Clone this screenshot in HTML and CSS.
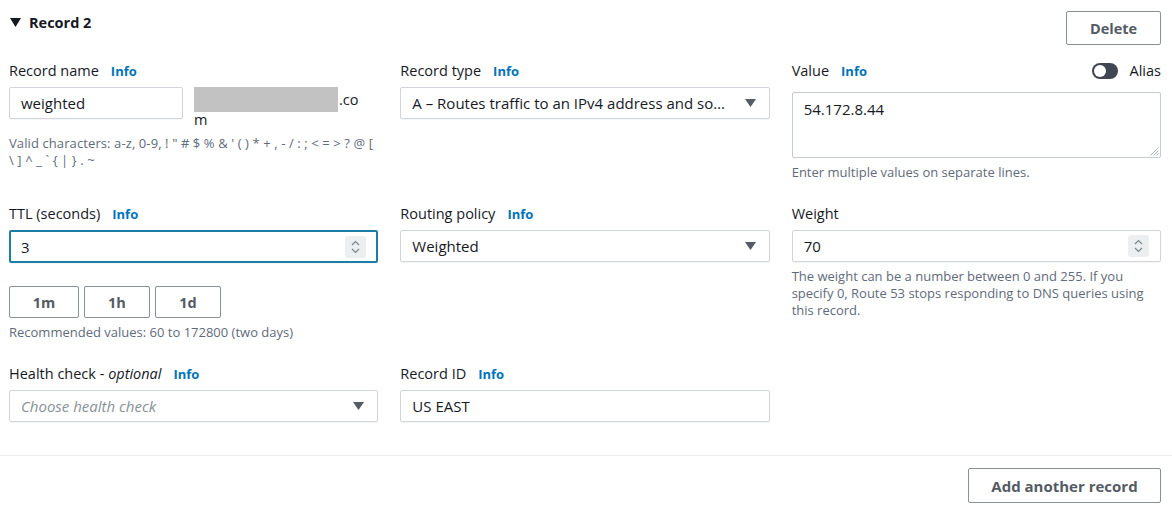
FILE: index.html
```html
<!DOCTYPE html>
<html lang="en">
<head>
<meta charset="utf-8">
<title>Record 2</title>
<link rel="stylesheet" href="styles.css">
</head>
<body>
<div class="page">
  <div class="header">
    <div class="title">
      <svg class="caret" width="11" height="9" viewBox="0 0 11 9"><path d="M0 0H11L5.5 9Z" fill="#16191f"/></svg>
      <span>Record 2</span>
    </div>
    <button class="btn btn-delete">Delete</button>
  </div>

  <div class="grid">
    <div class="field">
      <div class="label"><span>Record name</span><a class="info">Info</a></div>
      <div class="name-row">
        <div class="input name-input">weighted</div>
        <div class="domain">
          <div class="domain-line"><span class="redact"></span><span>.co</span></div>
          <div class="domain-tail">m</div>
        </div>
      </div>
      <div class="help help-chars">Valid characters: a-z, 0-9, ! " # $ % &amp; ' ( ) * + , - / : ; &lt; = &gt; ? @ [<br>\ ] ^ _ ` { | } . ~</div>
    </div>

    <div class="field">
      <div class="label"><span>Record type</span><a class="info">Info</a></div>
      <div class="input select">
        <span class="sel-text">A – Routes traffic to an IPv4 address and so…</span>
        <svg class="arrow" width="11" height="8" viewBox="0 0 11 8"><path d="M0 0H11L5.5 8Z" fill="#545b64"/></svg>
      </div>
    </div>

    <div class="field">
      <div class="label label-split">
        <div class="label-left"><span>Value</span><a class="info">Info</a></div>
        <div class="alias"><span class="toggle"><span class="knob"></span></span><span>Alias</span></div>
      </div>
      <div class="textarea">
        <div class="ta-text">54.172.8.44</div>
        <div class="ta-foot"><svg class="grip" width="10" height="10" viewBox="0 0 10 10"><path d="M9.5 1.5L1.5 9.5M9.5 4.5L4.5 9.5M9.5 7.5L7.5 9.5" stroke="#aab0b5" stroke-width="1"/></svg></div>
      </div>
      <div class="help help-value">Enter multiple values on separate lines.</div>
    </div>

    <div class="field">
      <div class="label"><span>TTL (seconds)</span><a class="info">Info</a></div>
      <div class="input number focused">
        <span>3</span>
        <span class="spin"><svg width="9" height="14" viewBox="0 0 9 14"><path d="M1 5L4.5 1.5L8 5M1 9L4.5 12.5L8 9" fill="none" stroke="#7d868c" stroke-width="1.2"/></svg></span>
      </div>
      <div class="ttl-buttons">
        <button class="btn btn-ttl">1m</button>
        <button class="btn btn-ttl">1h</button>
        <button class="btn btn-ttl">1d</button>
      </div>
      <div class="help help-rec">Recommended values: 60 to 172800 (two days)</div>
    </div>

    <div class="field">
      <div class="label"><span>Routing policy</span><a class="info">Info</a></div>
      <div class="input select">
        <span class="sel-text">Weighted</span>
        <svg class="arrow" width="11" height="8" viewBox="0 0 11 8"><path d="M0 0H11L5.5 8Z" fill="#545b64"/></svg>
      </div>
    </div>

    <div class="field">
      <div class="label"><span>Weight</span></div>
      <div class="input number">
        <span>70</span>
        <span class="spin"><svg width="9" height="14" viewBox="0 0 9 14"><path d="M1 5L4.5 1.5L8 5M1 9L4.5 12.5L8 9" fill="none" stroke="#7d868c" stroke-width="1.2"/></svg></span>
      </div>
      <div class="help help-weight">The weight can be a number between 0 and 255. If you specify 0, Route 53 stops responding to DNS queries using this record.</div>
    </div>

    <div class="field">
      <div class="label"><span>Health check - <em>optional</em></span><a class="info">Info</a></div>
      <div class="input select">
        <span class="sel-text placeholder">Choose health check</span>
        <svg class="arrow" width="11" height="8" viewBox="0 0 11 8"><path d="M0 0H11L5.5 8Z" fill="#545b64"/></svg>
      </div>
    </div>

    <div class="field">
      <div class="label"><span>Record ID</span><a class="info">Info</a></div>
      <div class="input">US EAST</div>
    </div>

    <div class="field"></div>
  </div>
</div>
<div class="divider"></div>
<div class="footer">
  <button class="btn btn-add">Add another record</button>
</div>
</body>
</html>
```

FILE: styles.css
```css
* { box-sizing: border-box; }
html, body { margin: 0; padding: 0; background: #fff; }
body {
  font-family: "Open Sans", "Noto Sans", "Liberation Sans", sans-serif;
  color: #16191f;
  font-size: 14px;
  width: 1172px;
  height: 508px;
  overflow: hidden;
}
.page { padding: 11px 11px 0 9px; }
.header { display: flex; justify-content: space-between; align-items: flex-start; height: 34px; }
.title { display: flex; align-items: center; gap: 8px; font-weight: 700; font-size: 14.5px; margin-top: 2px; padding-left: 1px; }
.caret { display: block; }
.btn {
  font-family: inherit;
  background: #fff;
  border: 1px solid #879196;
  border-radius: 2px;
  color: #545b64;
  font-weight: 700;
  font-size: 14.5px;
  cursor: pointer;
  padding: 0;
}
.btn-delete { width: 95px; height: 34px; }

.grid {
  margin-top: 16px;
  display: grid;
  grid-template-columns: repeat(3, minmax(0, 1fr));
  column-gap: 22px;
  row-gap: 23px;
  width: 1152px;
}
.field { display: flex; flex-direction: column; min-width: 0; }
.label { display: flex; align-items: center; gap: 12px; height: 20px; margin-bottom: 6px; font-size: 14.5px; line-height: 20px; }
.label em { font-style: italic; }
.label-split { justify-content: space-between; }
.label-left { display: flex; align-items: center; gap: 12px; }
.info { color: #0073bb; font-weight: 700; font-size: 13px; }
.alias { display: flex; align-items: center; gap: 12px; }
.toggle { width: 26px; height: 16px; border-radius: 8px; background: #414750; position: relative; display: block; }
.knob { position: absolute; left: 2px; top: 2px; width: 12px; height: 12px; border-radius: 50%; background: #fff; }

.input {
  height: 32px;
  border: 1px solid #d1d5d9;
  border-radius: 2px;
  background: #fff;
  display: flex;
  align-items: center;
  padding: 0 12px 0 11px;
  font-size: 15px;
  box-shadow: 0 1px 1px rgba(0,0,0,0.04);
}
.select { justify-content: space-between; gap: 14px; }
.sel-text { white-space: nowrap; min-width: 0; }
.placeholder { color: #879196; font-style: italic; }
.arrow { flex: none; margin-right: 1px; }
.number { justify-content: space-between; padding-right: 11px; }
.focused { border: 2px solid #1b7ea6; height: 33px; padding-left: 10px; padding-right: 10px; }
.spin { width: 21px; height: 22px; background: #eceeef; border-radius: 3px; display: flex; align-items: center; justify-content: center; }

.name-row { display: flex; align-items: flex-start; gap: 11px; height: 41px; }
.name-input { width: 174px; flex: none; }
.domain { display: flex; flex-direction: column; font-size: 14.5px; }
.domain-line { display: flex; align-items: center; height: 25px; }
.redact { display: block; width: 144px; height: 25px; background: #c2c2c2; margin-right: 1px; }
.domain-tail { line-height: 16px; }

.help { font-size: 13px; color: #5f6b7a; line-height: 17px; margin-top: 6px; }
.help-chars { margin-top: 7px; letter-spacing: 0.1px; white-space: nowrap; }
.help-value { margin-top: 6px; }
.help-weight { margin-top: 6px; }
.textarea {
  height: 66px;
  margin-top: 5px;
  border: 1px solid #c6cbcf;
  border-radius: 2px;
  padding: 6px 1px 1px 11px;
  font-size: 15px;
  line-height: 20px;
  display: flex;
  flex-direction: column;
  justify-content: space-between;
}
.ta-foot { display: flex; justify-content: flex-end; height: 10px; }
.grip { display: block; }

.ttl-buttons { display: flex; gap: 5px; margin-top: 23px; }
.btn-ttl { width: 70px; height: 32px; }
.btn-ttl:nth-child(2) { width: 66px; }
.btn-ttl:nth-child(3) { width: 66px; }
.help-rec { margin-top: 6px; }

.divider { margin-top: 33px; height: 1px; background: #eaeded; }
.footer { display: flex; justify-content: flex-end; padding: 12px 11px 0 0; }
.btn-add { width: 193px; height: 35px; font-size: 15px; }
```
